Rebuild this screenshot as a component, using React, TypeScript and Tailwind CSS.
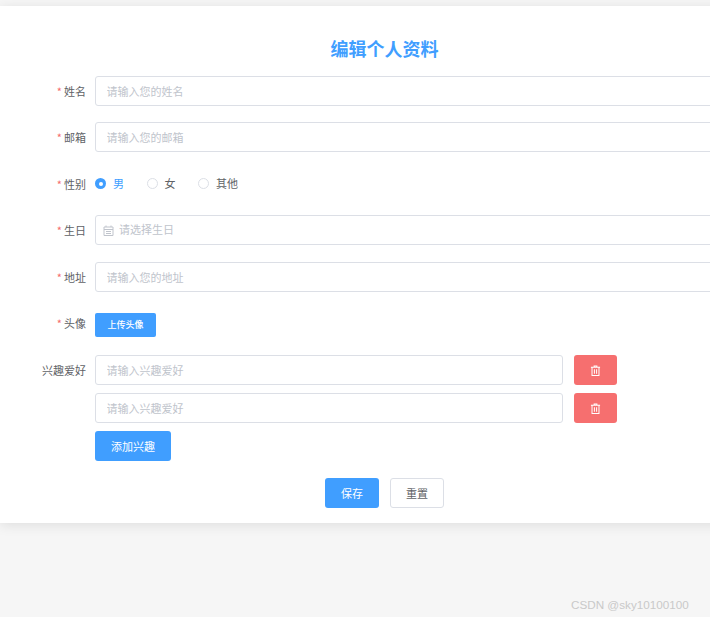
const cjk = "font-['Noto_Sans_CJK_SC','Liberation_Sans',sans-serif]"

function Label({ text, required = true, className = "" }: { text: string; required?: boolean; className?: string }) {
  return (
    <label className={`w-[86px] shrink-0 text-right text-[11px] leading-[20px] text-[#606266] ${className}`}>
      {required && <span className="mr-[2px] text-[#f56c6c]">*</span>}
      {text}
    </label>
  )
}

function TextInput({ placeholder, className = "" }: { placeholder: string; className?: string }) {
  return (
    <input
      placeholder={placeholder}
      className={`h-[30px] rounded-[3px] border border-[#dcdfe6] bg-white px-[10.5px] pb-[1px] text-[11px] outline-none placeholder:text-[#c0c4cc] ${className}`}
    />
  )
}

function TrashIcon() {
  return (
    <svg width="11" height="11" viewBox="0 0 12 12" fill="none" stroke="#fff" strokeWidth="1.1">
      <path d="M1 2.5h10M4.5 2.5V1h3v1.5M2.2 2.5v9h7.6v-9M4.8 4.5v5M7.2 4.5v5" />
    </svg>
  )
}

function CalendarIcon() {
  return (
    <svg width="11" height="11" viewBox="0 0 11 11" fill="none" stroke="#c0c4cc" strokeWidth="1" className="shrink-0">
      <path d="M1 2h9v8.5H1zM1 4.5h9M3 .5V2M8 .5V2M3 6.5h5M3 8.5h5" />
    </svg>
  )
}

function Radio({ text, checked = false }: { text: string; checked?: boolean }) {
  return (
    <div className="flex items-center gap-[7px]">
      {checked ? (
        <span className="flex h-[11px] w-[11px] items-center justify-center rounded-full bg-[#409eff]">
          <span className="h-[4px] w-[4px] rounded-full bg-white" />
        </span>
      ) : (
        <span className="h-[11px] w-[11px] rounded-full border border-[#dcdfe6] bg-white" />
      )}
      <span className={`text-[11px] ${checked ? "text-[#409eff]" : "text-[#606266]"}`}>{text}</span>
    </div>
  )
}

function InterestRow() {
  return (
    <div className="flex gap-[11px]">
      <TextInput placeholder="请输入兴趣爱好" className="w-[468px]" />
      <button className="flex h-[30px] w-[43px] items-center justify-center rounded-[3px] bg-[#f66f6f]">
        <TrashIcon />
      </button>
    </div>
  )
}

export default function App() {
  return (
    <div className={`relative h-[617px] w-[710px] overflow-hidden bg-[#f6f6f6] pt-[6px] ${cjk}`}>
      <div className="h-[517px] w-[769px] bg-white pt-[31px] shadow-[0_2px_12px_0_rgba(0,0,0,0.1)]">
        <h2 className="mb-[17px] text-center text-[18px] leading-[22px] font-bold text-[#409eff]">编辑个人资料</h2>

        <div className="mb-[16px] flex items-start gap-[9px]">
          <Label text="姓名" className="pt-[5px]" />
          <TextInput placeholder="请输入您的姓名" className="w-[655px]" />
        </div>

        <div className="mb-[16px] flex items-start gap-[9px]">
          <Label text="邮箱" className="pt-[5px]" />
          <TextInput placeholder="请输入您的邮箱" className="w-[655px]" />
        </div>

        <div className="mb-[16px] flex h-[31px] items-center gap-[9px]">
          <Label text="性别" />
          <div className="flex items-center gap-[22.5px]">
            <Radio text="男" checked />
            <Radio text="女" />
            <Radio text="其他" />
          </div>
        </div>

        <div className="mb-[17px] flex items-start gap-[9px]">
          <Label text="生日" className="pt-[5px]" />
          <div className="flex h-[30px] w-[655px] items-center gap-[5px] rounded-[3px] border border-[#dcdfe6] px-[7px]">
            <CalendarIcon />
            <input placeholder="请选择生日" className="w-full pb-[1px] text-[11px] outline-none placeholder:text-[#c0c4cc]" />
          </div>
        </div>

        <div className="mb-[21px] flex items-start gap-[9px]">
          <Label text="地址" className="pt-[5px]" />
          <TextInput placeholder="请输入您的地址" className="w-[655px]" />
        </div>

        <div className="mb-[18px] flex items-start gap-[9px]">
          <Label text="头像" />
          <button className="h-[24px] w-[61px] rounded-[2px] bg-[#409eff] pb-[1px] text-[9px] font-medium text-white">上传头像</button>
        </div>

        <div className="flex items-start gap-[9px]">
          <Label text="兴趣爱好" required={false} className="pt-[5px]" />
          <div className="flex flex-col gap-[8px]">
            <InterestRow />
            <InterestRow />
            <button className="h-[30px] w-[76px] rounded-[3px] bg-[#409eff] text-[11px] text-white">添加兴趣</button>
          </div>
        </div>

        <div className="mt-[17px] flex justify-center gap-[11px]">
          <button className="h-[30px] w-[54px] rounded-[3px] bg-[#409eff] text-[11px] text-white">保存</button>
          <button className="h-[30px] w-[54px] rounded-[3px] border border-[#dcdfe6] bg-white text-[11px] text-[#606266]">重置</button>
        </div>
      </div>

      <span className="absolute top-[597px] left-[571px] font-['Liberation_Sans',sans-serif] text-[11.7px] leading-[16px] text-[#c9c9c9]">
        CSDN @sky10100100
      </span>
    </div>
  )
}
